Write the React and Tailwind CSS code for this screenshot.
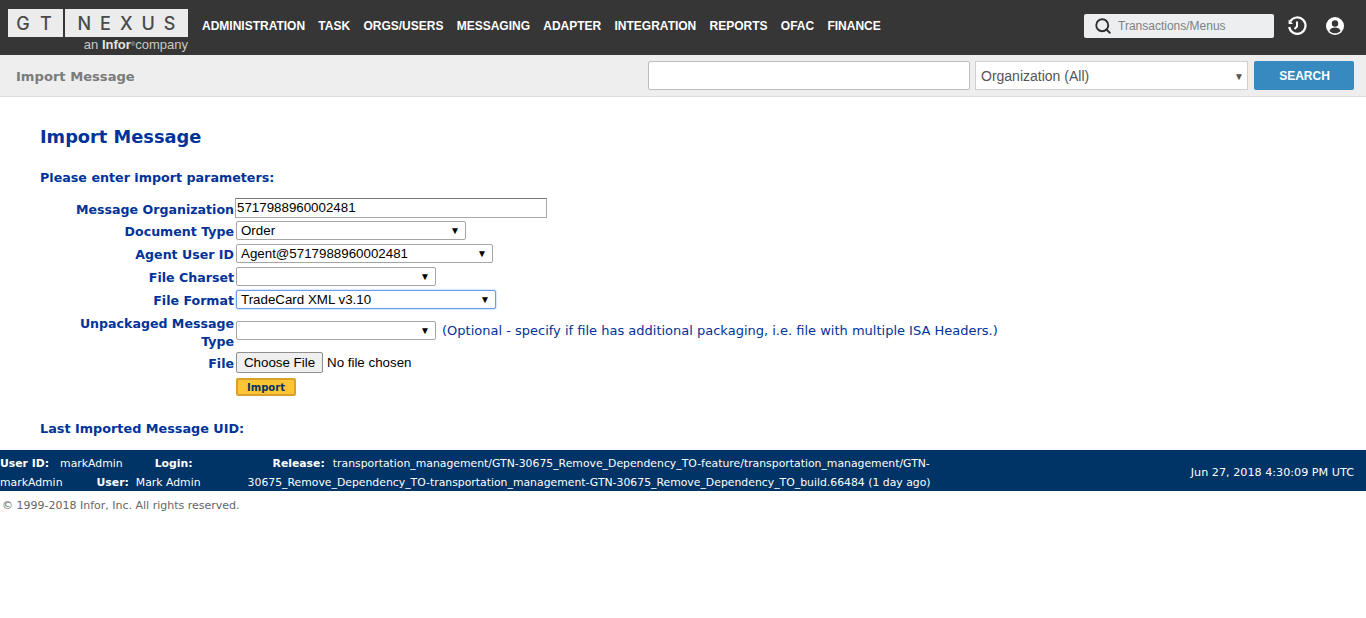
import React from 'react';
import { Search } from 'lucide-react';

const NAV = ['ADMINISTRATION', 'TASK', 'ORGS/USERS', 'MESSAGING', 'ADAPTER', 'INTEGRATION', 'REPORTS', 'OFAC', 'FINANCE'];

const verdana = 'font-["DejaVu_Sans",Verdana,sans-serif]';
const arial = 'font-["Liberation_Sans",Arial,sans-serif]';

const Row = ({ label, className = '', labelClass = 'pt-[2px]', children }) => (
  <div className={`flex items-center ${className}`}>
    <label className={`w-[194px] shrink-0 text-right text-[12.6px] font-bold leading-[18px] text-[#003399] ${labelClass}`}>{label}</label>
    <div className="flex items-center pl-[2px]">{children}</div>
  </div>
);

const FormSelect = ({ width, value, focused }) => (
  <div
    className={`flex h-[19px] items-center justify-between rounded-[2px] border bg-white pl-1 pr-[5px] text-[13.33px] leading-none text-black ${arial} ${
      focused ? 'border-[#6a9ce8] shadow-[0_0_2px_#7aa7ee]' : 'border-[#a6a6a6]'
    } ${width}`}
  >
    <span>{value}</span>
    <span className="text-[10px] leading-none">▼</span>
  </div>
);

const ClockIcon = () => (
  <svg width="22" height="22" viewBox="0 0 22 22" fill="none" stroke="white" strokeWidth="2.2">
    <path d="M4.200 6.500A8.200 8.200 0 1 1 3.200 12" />
    <path d="M2.600 4.500v4.400h4.400" fill="white" stroke="none" />
    <path d="M11 6.500V11.500L8.500 14" strokeWidth="2" />
  </svg>
);

const UserIcon = () => (
  <svg width="20" height="20" viewBox="0 0 20 20">
    <circle cx="10" cy="10" r="9" fill="white" />
    <circle cx="10" cy="7.500" r="3.200" fill="#363636" />
    <path d="M4.500 15c.8-2.600 3-3.500 5.500-3.500s4.700.9 5.500 3.500c-1.400 1.500-3.400 2.300-5.500 2.300S5.900 16.500 4.500 15z" fill="#363636" />
  </svg>
);

export default function App() {
  return (
    <div className={`min-h-[618px] bg-white ${verdana}`}>
      {/* Top bar */}
      <header className="flex h-[55px] items-start bg-[#363636]">
        <div className="ml-[8px] mt-[9px] w-[180px] shrink-0">
          <div className='flex h-[28px] gap-[2px] font-["Inter",sans-serif] font-medium text-[#4a4a4a]'>
            <div className="flex w-[55px] items-center justify-center bg-[#ececec] pl-[8px] text-[18px] tracking-[11px]">GT</div>
            <div className="flex flex-1 items-center justify-center bg-[#ececec] pl-[9px] text-[18px] tracking-[9px]">NEXUS</div>
          </div>
          <div className={`mt-[1px] text-right text-[13px] leading-[14px] text-[#c9c9c9] ${arial}`}>
            an <span className="font-bold text-[#e4e4e4]">Infor</span>
            <sup className="text-[6px]">®</sup>company
          </div>
        </div>
        <nav className={`ml-[14px] mt-[19px] flex gap-[13.25px] text-[12px] font-bold leading-[15px] text-white ${arial}`}>
          {NAV.map((item) => (
            <span key={item}>{item}</span>
          ))}
        </nav>
        <div className="ml-auto mr-[21px] mt-[14px] flex items-center">
          <div className={`flex h-[24px] w-[190px] items-center rounded-[2px] bg-[#edeef0] pl-[10px] text-[12px] text-[#7d8288] ${arial}`}>
            <Search size={18} strokeWidth={2.5} className="text-[#2f2f2f]" />
            <span className="ml-[6px]">Transactions/Menus</span>
          </div>
          <div className="ml-[12px] flex"><ClockIcon /></div>
          <div className="ml-[17px] flex"><UserIcon /></div>
        </div>
      </header>

      {/* Sub header */}
      <div className="flex h-[42px] items-center border-b border-[#dcdcdc] bg-[#eeeeee] pl-[16px] pr-[12px]">
        <span className="pt-[2px] text-[13.100px] font-bold text-[#7b7b7b]">Import Message</span>
        <div className={`ml-auto flex items-center ${arial}`}>
          <div className="h-[29px] w-[322px] rounded-[2px] border border-[#bdbdbd] bg-white" />
          <div className="ml-[5px] flex h-[29px] w-[273px] items-center justify-between border border-[#cfcfcf] bg-white pl-[5px] pr-[3px] pt-[2px] text-[14px] text-[#555]">
            <span>Organization (All)</span>
            <span className="text-[10px] text-[#555]">▼</span>
          </div>
          <button className="ml-[6px] h-[29px] w-[100px] rounded-[2px] bg-[#368ac0] pl-[1px] text-[12px] font-bold text-white">SEARCH</button>
        </div>
      </div>

      {/* Form */}
      <main className="h-[353px] pl-[40px] pt-[28px]">
        <h1 className="text-[17.800px] font-bold leading-[24px] text-[#003399]">Import Message</h1>
        <p className="mt-[20px] text-[12.700px] font-bold leading-[18px] text-[#003399]">Please enter import parameters:</p>

        <div className="mt-[11px] flex flex-col">
          <Row label="Message Organization" labelClass="pt-[4px]" className="h-[20px]">
            <div className={`-ml-[1px] flex h-[20px] w-[312px] items-center border border-[#a9a9a9] border-t-[#767676] pl-[1px] text-[13.33px] text-black ${arial}`}>5717988960002481</div>
          </Row>
          <Row label="Document Type" className="mt-[3px] h-[19px]"><FormSelect width="w-[230px]" value="Order" /></Row>
          <Row label="Agent User ID" className="mt-[4px] h-[19px]"><FormSelect width="w-[257px]" value="Agent@5717988960002481" /></Row>
          <Row label="File Charset" className="mt-[4px] h-[19px]"><FormSelect width="w-[200px]" value="" /></Row>
          <Row label="File Format" className="mt-[4px] h-[19px]"><FormSelect width="w-[260px]" value="TradeCard XML v3.10" focused /></Row>
          <Row label={<>Unpackaged Message<br />Type</>} className="mt-[4px] h-[37px]">
            <div className="mb-[2px] flex items-center">
              <FormSelect width="w-[200px]" value="" />
              <span className="ml-[6px] text-[13px] text-[#003399]">
                (Optional - specify if file has additional packaging, i.e. file with multiple ISA Headers.)
              </span>
            </div>
          </Row>
          <Row label="File" className="mt-[2px] h-[21px]">
            <div className={`flex items-center text-[13.33px] text-black ${arial}`}>
              <button className="h-[21px] w-[87px] rounded-[2px] border border-[#8f8f8f] bg-[#efefef]">Choose File</button>
              <span className="ml-[4px]">No file chosen</span>
            </div>
          </Row>
          <div className="ml-[196px] mt-[5px]">
            <button className="block h-[18px] w-[60px] rounded-[2px] border-2 border-[#d9a02c] bg-[#fdc533] pt-[1px] text-[10px] font-bold leading-none text-[#003366]">Import</button>
          </div>
        </div>

        <p className="mt-[24px] text-[12.800px] font-bold leading-[18px] text-[#003399]">Last Imported Message UID:</p>
      </main>

      {/* Status bar */}
      <footer className="flex h-[41px] items-center justify-between bg-[#003366] pr-[12px] pt-[4px] text-[10.85px] leading-[19px] text-white">
        <div className="w-[960px]">
          <div className="flex whitespace-nowrap">
            <b>User ID:</b><span className="ml-[11px]">markAdmin</span>
            <b className="ml-[32px]">Login:</b>
            <b className="ml-[80px]">Release:</b>
            <span className="ml-[8px]">transportation_management/GTN-30675_Remove_Dependency_TO-feature/transportation_management/GTN-</span>
          </div>
          <div className="flex whitespace-nowrap">
            <span>markAdmin</span>
            <b className="ml-[34px]">User:</b><span className="ml-[7px]">Mark Admin</span>
            <span className="ml-[47px]">30675_Remove_Dependency_TO-transportation_management-GTN-30675_Remove_Dependency_TO_build.66484 (1 day ago)</span>
          </div>
        </div>
        <span className="text-[11.2px]">Jun 27, 2018 4:30:09 PM UTC</span>
      </footer>

      <p className="pl-[2px] pt-[7px] text-[11px] leading-[16px] text-[#666]">© 1999-2018 Infor, Inc. All rights reserved.</p>
    </div>
  );
}
